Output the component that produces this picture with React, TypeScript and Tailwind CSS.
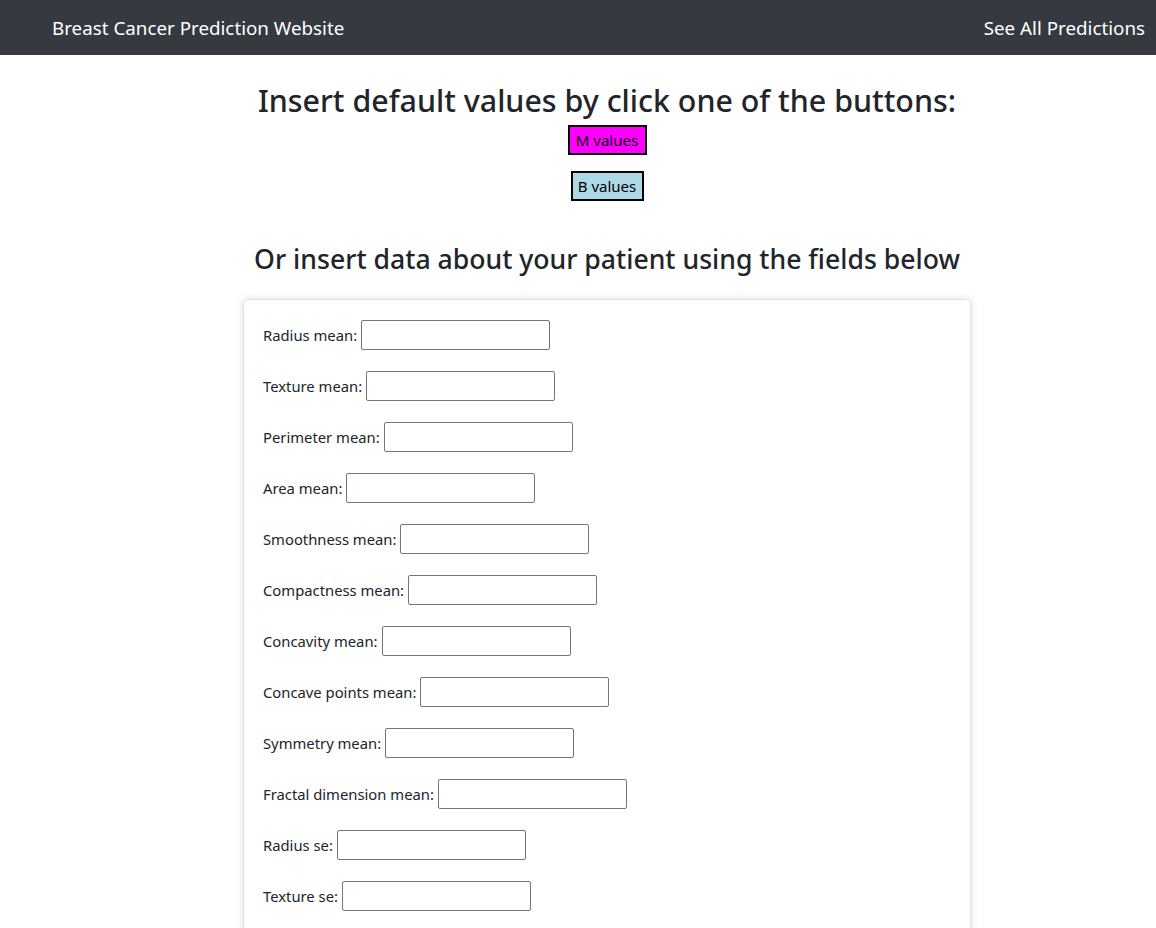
import React from "react";

const fields = [
  "Radius mean:",
  "Texture mean:",
  "Perimeter mean:",
  "Area mean:",
  "Smoothness mean:",
  "Compactness mean:",
  "Concavity mean:",
  "Concave points mean:",
  "Symmetry mean:",
  "Fractal dimension mean:",
  "Radius se:",
  "Texture se:",
];

export default function App() {
  return (
    <div className="min-h-screen bg-white text-[#212529] [font-family:'Noto_Sans',sans-serif]">
      <nav className="h-[55px] bg-[#343a40] flex items-center justify-between pl-[52px] pr-[11px] pt-[2px]">
        <span className="text-white text-[18.8px]">Breast Cancer Prediction Website</span>
        <span className="text-white text-[18.8px]">See All Predictions</span>
      </nav>
      <div className="ml-[243px] w-[728px] flex flex-col items-center text-center">
        <h2 className="mt-[27px] text-[30.4px] leading-[38px] font-medium whitespace-nowrap">
          Insert default values by click one of the buttons:
        </h2>
        <button className="mt-[5px] h-[30px] w-[79px] bg-[#ff00ff] border-2 border-[#000] text-[15px] text-black">
          M values
        </button>
        <button className="mt-[16px] h-[30px] w-[73px] bg-[#add8e6] border-2 border-[#000] text-[15px] text-black">
          B values
        </button>
        <h3 className="mt-[41px] text-[26.6px] leading-[34px] font-medium whitespace-nowrap">
          Or insert data about your patient using the fields below
        </h3>
        <div className="mt-[23px] w-[728px] border border-[#dee2e6] rounded-[4px] shadow-[0_0_8px_rgba(0,0,0,0.12)] pt-[20px] pb-[40px] pl-[19px] pr-[20px] flex flex-col gap-[21px] items-start">
          {fields.map((f) => (
            <div key={f} className="flex items-center">
              <label className="text-[14.8px] mr-[4px]">{f}</label>
              <input
                type="text"
                className="w-[189px] h-[30px] border border-[#767676] rounded-[2px]"
              />
            </div>
          ))}
        </div>
      </div>
    </div>
  );
}
